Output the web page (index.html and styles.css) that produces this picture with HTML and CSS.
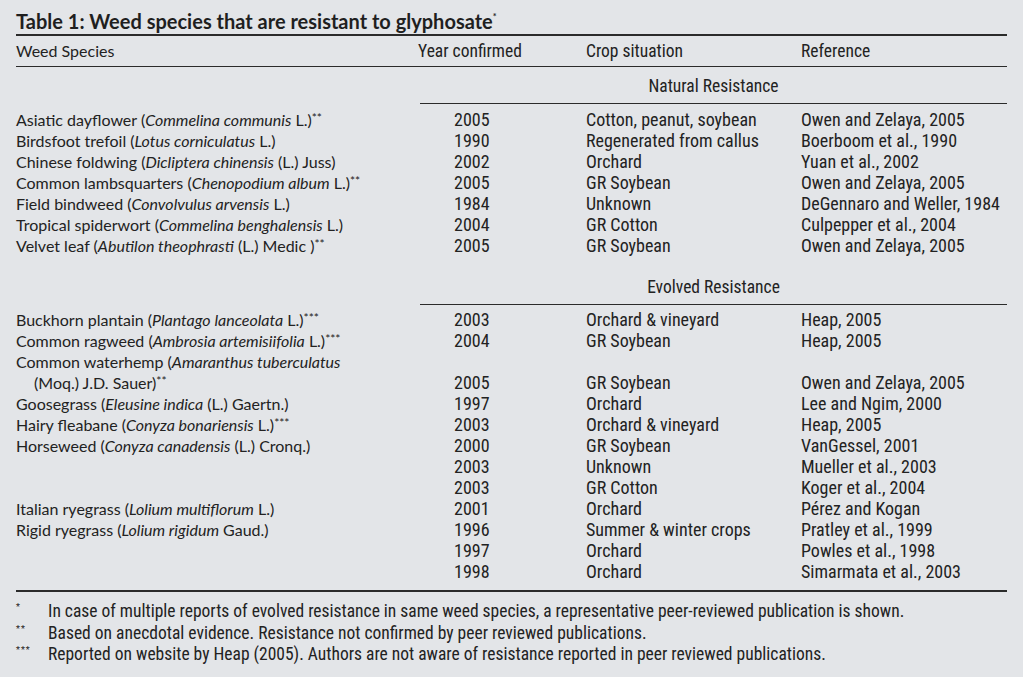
FILE: index.html
```html
<!DOCTYPE html>
<html>
<head>
<meta charset="utf-8">
<link rel="stylesheet" href="styles.css">
</head>
<body>
<div class="page">
  <h1 class="title">Table 1: Weed species that are resistant to glyphosate<sup class="tmark">*</sup></h1>
  <table class="tbl">
    <colgroup>
      <col class="c1"><col class="c2"><col class="c3"><col class="c4">
    </colgroup>
    <thead>
      <tr class="head">
        <th class="sp">Weed Species</th>
        <th class="hd">Year confirmed</th>
        <th class="hd">Crop situation</th>
        <th class="hd">Reference</th>
      </tr>
    </thead>
    <tbody>
      <tr class="sec first">
        <td></td>
        <td colspan="3"><div class="secline">Natural Resistance</div></td>
      </tr>
      <tr class="r"><td class="sp">Asiatic dayflower (<i>Commelina communis</i> L.)<span class="ast">**</span></td><td class="yr">2005</td><td class="nc">Cotton, peanut, soybean</td><td class="nc">Owen and Zelaya, 2005</td></tr>
      <tr class="r"><td class="sp">Birdsfoot trefoil (<i>Lotus corniculatus</i> L.)</td><td class="yr">1990</td><td class="nc">Regenerated from callus</td><td class="nc">Boerboom et al., 1990</td></tr>
      <tr class="r"><td class="sp">Chinese foldwing (<i>Dicliptera chinensis</i> (L.) Juss)</td><td class="yr">2002</td><td class="nc">Orchard</td><td class="nc">Yuan et al., 2002</td></tr>
      <tr class="r"><td class="sp">Common lambsquarters (<i>Chenopodium album</i> L.)<span class="ast">**</span></td><td class="yr">2005</td><td class="nc">GR Soybean</td><td class="nc">Owen and Zelaya, 2005</td></tr>
      <tr class="r"><td class="sp">Field bindweed (<i>Convolvulus arvensis</i> L.)</td><td class="yr">1984</td><td class="nc">Unknown</td><td class="nc">DeGennaro and Weller, 1984</td></tr>
      <tr class="r"><td class="sp">Tropical spiderwort (<i>Commelina benghalensis</i> L.)</td><td class="yr">2004</td><td class="nc">GR Cotton</td><td class="nc">Culpepper et al., 2004</td></tr>
      <tr class="r"><td class="sp">Velvet leaf (<i>Abutilon theophrasti</i> (L.) Medic )<span class="ast">**</span></td><td class="yr">2005</td><td class="nc">GR Soybean</td><td class="nc">Owen and Zelaya, 2005</td></tr>
      <tr class="sec second">
        <td></td>
        <td colspan="3"><div class="secline">Evolved Resistance</div></td>
      </tr>
      <tr class="r"><td class="sp">Buckhorn plantain (<i>Plantago lanceolata</i> L.)<span class="ast">***</span></td><td class="yr">2003</td><td class="nc">Orchard &amp; vineyard</td><td class="nc">Heap, 2005</td></tr>
      <tr class="r"><td class="sp">Common ragweed (<i>Ambrosia artemisiifolia</i> L.)<span class="ast">***</span></td><td class="yr">2004</td><td class="nc">GR Soybean</td><td class="nc">Heap, 2005</td></tr>
      <tr class="r"><td class="sp">Common waterhemp (<i>Amaranthus tuberculatus</i></td><td></td><td></td><td></td></tr>
      <tr class="r"><td class="sp indent">(Moq.) J.D. Sauer)<span class="ast">**</span></td><td class="yr">2005</td><td class="nc">GR Soybean</td><td class="nc">Owen and Zelaya, 2005</td></tr>
      <tr class="r"><td class="sp">Goosegrass (<i>Eleusine indica</i> (L.) Gaertn.)</td><td class="yr">1997</td><td class="nc">Orchard</td><td class="nc">Lee and Ngim, 2000</td></tr>
      <tr class="r"><td class="sp">Hairy fleabane (<i>Conyza bonariensis</i> L.)<span class="ast">***</span></td><td class="yr">2003</td><td class="nc">Orchard &amp; vineyard</td><td class="nc">Heap, 2005</td></tr>
      <tr class="r"><td class="sp">Horseweed (<i>Conyza canadensis</i> (L.) Cronq.)</td><td class="yr">2000</td><td class="nc">GR Soybean</td><td class="nc">VanGessel, 2001</td></tr>
      <tr class="r"><td class="sp"></td><td class="yr">2003</td><td class="nc">Unknown</td><td class="nc">Mueller et al., 2003</td></tr>
      <tr class="r"><td class="sp"></td><td class="yr">2003</td><td class="nc">GR Cotton</td><td class="nc">Koger et al., 2004</td></tr>
      <tr class="r"><td class="sp">Italian ryegrass (<i>Lolium multiflorum</i> L.)</td><td class="yr">2001</td><td class="nc">Orchard</td><td class="nc">Pérez and Kogan</td></tr>
      <tr class="r"><td class="sp">Rigid ryegrass (<i>Lolium rigidum</i> Gaud.)</td><td class="yr">1996</td><td class="nc">Summer &amp; winter crops</td><td class="nc">Pratley et al., 1999</td></tr>
      <tr class="r"><td class="sp"></td><td class="yr">1997</td><td class="nc">Orchard</td><td class="nc">Powles et al., 1998</td></tr>
      <tr class="r last"><td class="sp"></td><td class="yr">1998</td><td class="nc">Orchard</td><td class="nc">Simarmata et al., 2003</td></tr>
    </tbody>
  </table>
  <ul class="notes">
    <li><span class="mk">*</span><span>In case of multiple reports of evolved resistance in same weed species, a representative peer-reviewed publication is shown.</span></li>
    <li><span class="mk">**</span><span>Based on anecdotal evidence. Resistance not confirmed by peer reviewed publications.</span></li>
    <li><span class="mk">***</span><span>Reported on website by Heap (2005). Authors are not aware of resistance reported in peer reviewed publications.</span></li>
  </ul>
</div>
</body>
</html>
```

FILE: styles.css
```css
html, body {
  margin: 0;
  padding: 0;
}
body {
  background: #e3e5e8;
  color: #222;
  font-family: "Lato", "Liberation Sans", sans-serif;
}
.page {
  width: 991px;
  padding: 9px 0 0 16px;
}
.title {
  margin: 0;
  font-size: 20px;
  font-weight: 700;
  line-height: 25px;
  height: 25px;
  color: #1f1f1f;
}
.tmark {
  font-size: 9px;
  vertical-align: 9px;
  line-height: 0;
}
.tbl {
  width: 991px;
  border-collapse: collapse;
  table-layout: fixed;
  margin-top: 0;
}
.c1 { width: 402px; }
.c2 { width: 168px; }
.c3 { width: 215px; }
.c4 { width: 206px; }
.tbl th, .tbl td {
  padding: 0;
  text-align: left;
  font-weight: 400;
  white-space: nowrap;
  vertical-align: middle;
}
.head th {
  border-top: 2px solid #2b2b2b;
  border-bottom: 1px solid #2b2b2b;
  height: 30px;
  line-height: 30px;
}
.sp {
  font-size: 16px;
}
.sp i {
  font-style: italic;
}
.indent {
  padding-left: 18px !important;
}
.ast {
  font-size: 12px;
  vertical-align: 4px;
  line-height: 0;
}
.sec.first td {
  padding-top: 9px;
  padding-bottom: 5px;
}
.sec.second td {
  padding-top: 21px;
  padding-bottom: 4px;
}
.secline {
  margin-left: 2px;
  border-bottom: 1px solid #2b2b2b;
  text-align: center;
  line-height: 21px;
  padding-bottom: 6px;
}
.head .hd, .secline, .yr, .nc, .notes {
  font-family: "Roboto Condensed", "Liberation Sans Narrow", "DejaVu Sans Condensed", sans-serif;
  font-stretch: condensed;
}
.head .hd, .secline {
  font-size: 17.5px;
}
.yr, .nc {
  font-size: 18px;
}
.r td {
  height: 21px;
  line-height: 21px;
}
.yr {
  padding-left: 36px !important;
}
.r.last td {
  padding-bottom: 8px;
}
.tbl tbody tr:last-child td {
  border-bottom: 2px solid #2b2b2b;
}
.notes {
  list-style: none;
  margin: 0;
  padding: 9px 0 0 0;
  font-size: 17.5px;
}
.notes li {
  display: flex;
  line-height: 21.5px;
}
.mk {
  width: 32px;
  flex: none;
  font-size: 9px;
  line-height: 12px;
  letter-spacing: 1px;
}
```
